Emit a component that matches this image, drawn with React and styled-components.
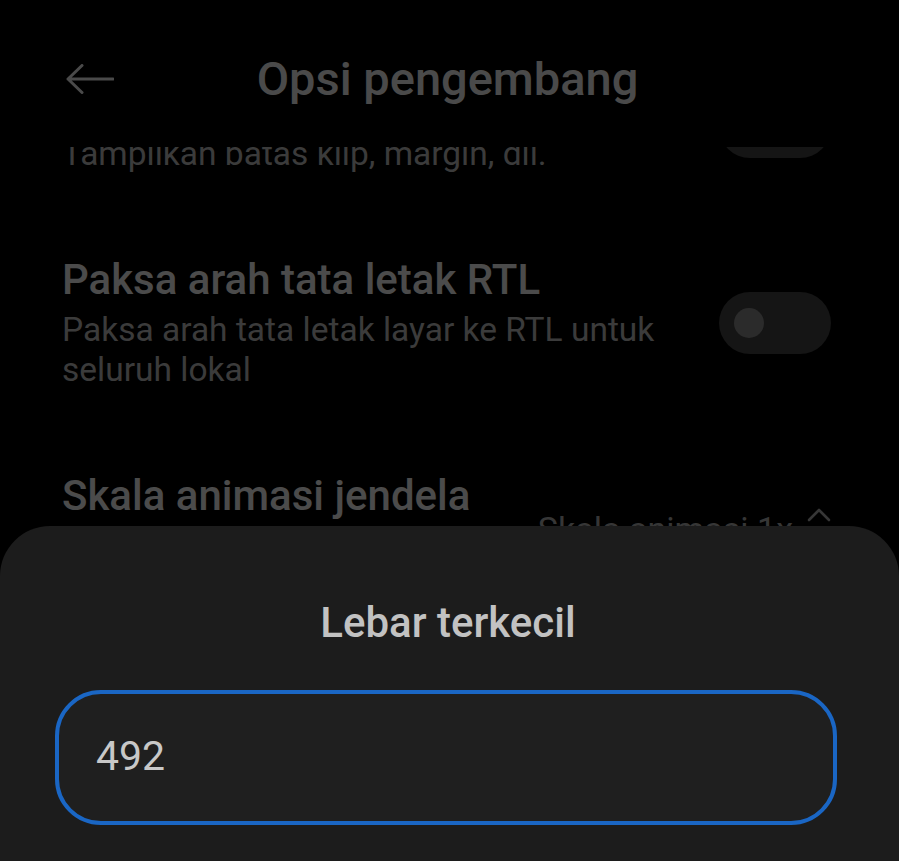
import React from 'react';
import styled, { createGlobalStyle } from 'styled-components';

const GlobalStyle = createGlobalStyle`
  html, body {
    margin: 0;
    padding: 0;
    background: #000;
  }
  body {
    font-family: Roboto, "Noto Sans", "Liberation Sans", sans-serif;
  }
`;

const Screen = styled.div`
  position: relative;
  width: 899px;
  height: 861px;
  overflow: hidden;
  background: #000;
  display: flex;
  flex-direction: column;
`;

const Header = styled.header`
  height: 147px;
  flex-shrink: 0;
  box-sizing: border-box;
  padding-top: 50px;
  display: grid;
  grid-template-columns: 1fr auto 1fr;
  align-items: start;
`;

const BackButton = styled.button`
  justify-self: start;
  margin-left: 66px;
  margin-top: 14px;
  padding: 0;
  border: none;
  background: none;
  color: #d4d4d4;
  display: flex;
`;

const Title = styled.h1`
  margin: 0;
  font-size: 47px;
  line-height: 58px;
  font-weight: 500;
  color: #d4d4d4;
  padding-right: 4px;
`;

const Viewport = styled.div`
  flex: 1;
  overflow: hidden;
`;

const List = styled.div`
  margin-top: -108px;
  display: flex;
  flex-direction: column;
`;

const Item = styled.div`
  display: flex;
  align-items: center;
  gap: 24px;
  padding: 41px 68px 41px 62px;
`;

const ItemText = styled.div`
  flex: 1;
  display: flex;
  flex-direction: column;
  gap: 6px;
`;

const ItemTitle = styled.div`
  font-size: 42px;
  line-height: 48px;
  font-weight: 500;
  color: #d6d6d6;
`;

const ItemSummary = styled.div`
  font-size: 33.5px;
  line-height: 40px;
  color: #a8a8a8;
  max-width: 610px;
`;

const Toggle = styled.div`
  width: 112px;
  height: 62px;
  flex-shrink: 0;
  border-radius: 31px;
  background: #3c3c3c;
  display: flex;
  align-items: center;
  padding-left: 15px;
  box-sizing: border-box;
`;

const Knob = styled.span`
  width: 30px;
  height: 30px;
  border-radius: 50%;
  background: #7b7b7b;
`;

const Value = styled.div`
  display: flex;
  align-items: center;
  gap: 14px;
  font-size: 34px;
  color: #9a9a9a;
  margin-top: 20px;
`;

const Scrim = styled.div`
  position: absolute;
  inset: 0;
  background: rgba(0, 0, 0, 0.65);
`;

const Sheet = styled.div`
  position: absolute;
  left: 0;
  right: 0;
  top: 526px;
  bottom: 0;
  background: #1c1c1c;
  border-radius: 50px 50px 0 0;
  box-sizing: border-box;
  padding: 73px 62px 0 55px;
  display: flex;
  flex-direction: column;
  align-items: stretch;
  gap: 43px;
`;

const SheetTitle = styled.h2`
  margin: 0;
  text-align: center;
  font-size: 42px;
  line-height: 48px;
  font-weight: 500;
  color: #c2c2c2;
  padding-left: 4px;
`;

const Field = styled.input`
  height: 135px;
  box-sizing: border-box;
  border: 4px solid #1a66c4;
  border-radius: 46px;
  background: #1f1f1f;
  padding: 0 0 4px 37px;
  font-family: inherit;
  font-size: 41px;
  color: #c8c8c8;
  outline: none;
`;

const ArrowLeft = () => (
  <svg width="48" height="30" viewBox="0 0 48 30" fill="none" stroke="currentColor" strokeWidth="3" strokeLinecap="round" strokeLinejoin="round">
    <path d="M47 15H2M16 1.5L2 15l14 13.5" />
  </svg>
);

const UpDown = () => (
  <svg width="24" height="44" viewBox="0 0 24 44" fill="none" stroke="currentColor" strokeWidth="2.6" strokeLinecap="round" strokeLinejoin="round">
    <path d="M2 13L12 3l10 10M2 31l10 10 10-10" />
  </svg>
);

export default function App() {
  return (
    <Screen>
      <GlobalStyle />
      <Header>
        <BackButton aria-label="Kembali">
          <ArrowLeft />
        </BackButton>
        <Title>Opsi pengembang</Title>
        <span />
      </Header>
      <Viewport>
        <List>
          <Item>
            <ItemText>
              <ItemTitle>Tampilkan batas tata letak</ItemTitle>
              <ItemSummary>Tampilkan batas klip, margin, dll.</ItemSummary>
            </ItemText>
            <Toggle><Knob /></Toggle>
          </Item>
          <Item>
            <ItemText>
              <ItemTitle>Paksa arah tata letak RTL</ItemTitle>
              <ItemSummary>Paksa arah tata letak layar ke RTL untuk seluruh lokal</ItemSummary>
            </ItemText>
            <Toggle><Knob /></Toggle>
          </Item>
          <Item>
            <ItemText>
              <ItemTitle>Skala animasi jendela</ItemTitle>
              <ItemSummary>&nbsp;</ItemSummary>
            </ItemText>
            <Value>
              Skala animasi 1x
              <UpDown />
            </Value>
          </Item>
        </List>
      </Viewport>
      <Scrim />
      <Sheet>
        <SheetTitle>Lebar terkecil</SheetTitle>
        <Field readOnly value="492" />
      </Sheet>
    </Screen>
  );
}
